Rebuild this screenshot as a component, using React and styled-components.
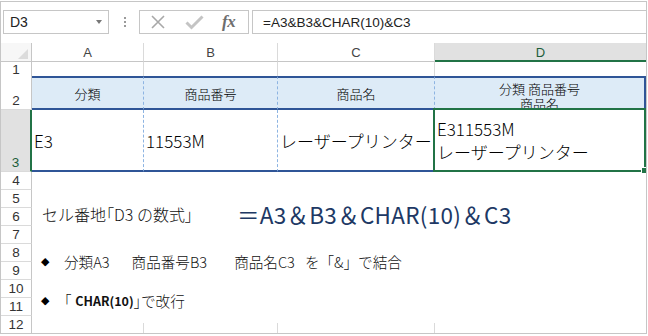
import React from "react";
import styled, { createGlobalStyle } from "styled-components";

const GlobalStyle = createGlobalStyle`
  html, body {
    margin: 0;
    padding: 0;
    background: #ffffff;
  }
  body {
    font-family: "Noto Sans CJK JP", "Noto Sans", sans-serif;
    font-weight: 300;
    color: #000;
  }
`;

const COLS = "31px 112px 134px 157px 1fr";
const BLUE = "#2f5597";
const GREEN = "#217346";
const GRID = "#dadada";

const Frame = styled.div`
  box-sizing: border-box;
  width: 647px;
  height: 333px;
  margin-top: 1px;
  border: 1px solid #c6c6c6;
  display: flex;
  flex-direction: column;
  overflow: hidden;
`;

/* formula bar */
const FormulaBar = styled.div`
  height: 41px;
  flex-shrink: 0;
  display: flex;
  align-items: flex-start;
  padding: 8px 0 0 2px;
  box-sizing: border-box;
`;

const NameBox = styled.div`
  box-sizing: border-box;
  width: 106px;
  height: 24px;
  border: 1px solid #c6c6c6;
  display: flex;
  align-items: center;
  justify-content: space-between;
  padding: 0 6px 0 6px;
  font-family: "Liberation Sans", Arial, sans-serif;
  font-weight: 400;
  font-size: 14px;
  color: #222;
`;

const Caret = styled.span`
  width: 0;
  height: 0;
  border-left: 3.5px solid transparent;
  border-right: 3.5px solid transparent;
  border-top: 4px solid #777;
`;

const Dots = styled.div`
  width: 2px;
  margin: 7px 13px 0 15px;
  display: flex;
  flex-direction: column;
  gap: 2px;
  span {
    width: 2px;
    height: 2px;
    background: #9a9a9a;
  }
`;

const FxBox = styled.div`
  box-sizing: border-box;
  width: 110px;
  height: 24px;
  border: 1px solid #c6c6c6;
  display: flex;
  align-items: center;
  padding-left: 10px;
`;

const FxLabel = styled.span`
  margin-left: 18px;
  font-family: "Liberation Serif", "DejaVu Serif", serif;
  font-style: italic;
  font-weight: bold;
  font-size: 17px;
  color: #6e6e6e;
  letter-spacing: -0.5px;
`;

const FormulaInput = styled.div`
  box-sizing: border-box;
  flex: 1;
  margin-left: 3px;
  height: 24px;
  border: 1px solid #c6c6c6;
  border-right: none;
  display: flex;
  align-items: center;
  padding-left: 10px;
  font-family: "Liberation Sans", Arial, sans-serif;
  font-weight: 400;
  font-size: 13.5px;
  color: #222;
`;

/* sheet */
const Row = styled.div`
  display: grid;
  grid-template-columns: ${COLS};
  height: ${(p) => p.$h}px;
  flex-shrink: 0;
`;

const Corner = styled.div`
  box-sizing: border-box;
  border-right: 1px solid #c6c6c6;
  border-bottom: 1px solid #c6c6c6;
  background: #f7f7f7;
  display: flex;
  align-items: flex-end;
  justify-content: flex-end;
  padding: 0 3px 2px 0;
  span {
    width: 0;
    height: 0;
    border-left: 10px solid transparent;
    border-bottom: 10px solid #dcdcdc;
  }
`;

const ColHead = styled.div`
  box-sizing: border-box;
  border-right: ${(p) => (p.$last ? "none" : `1px solid ${GRID}`)};
  border-bottom: ${(p) => (p.$active ? `2px solid ${GREEN}` : "1px solid #c6c6c6")};
  background: ${(p) => (p.$active ? "#e1e1e1" : "#ffffff")};
  color: ${(p) => (p.$active ? "#1e5e3b" : "#444")};
  font-family: "Liberation Sans", Arial, sans-serif;
  font-weight: 400;
  font-size: 13px;
  display: flex;
  align-items: center;
  justify-content: center;
  padding-top: 1px;
`;

const RowHead = styled.div`
  box-sizing: border-box;
  border-right: ${(p) => (p.$active ? `2px solid ${GREEN}` : "1px solid #c6c6c6")};
  border-bottom: ${(p) => (p.$end ? "none" : `1px solid ${GRID}`)};
  background: ${(p) => (p.$active ? "#e1e1e1" : "#ffffff")};
  color: ${(p) => (p.$active ? "#1e5e3b" : "#333")};
  font-family: "Liberation Sans", Arial, sans-serif;
  font-weight: 400;
  font-size: 13.5px;
  display: flex;
  align-items: flex-end;
  justify-content: center;
  line-height: 16px;
  flex: ${(p) => (p.$flex ? 1 : "none")};
`;

const GridCell = styled.div`
  box-sizing: border-box;
  border-right: ${(p) => (p.$last ? "none" : `1px solid ${GRID}`)};
`;

const TableCell = styled.div`
  box-sizing: border-box;
  position: relative;
  background: ${(p) => (p.$head ? "#ddebf7" : "#ffffff")};
  border-top: ${(p) => (p.$top ? `2px solid ${BLUE}` : "none")};
  border-bottom: 2px solid ${BLUE};
  border-right: ${(p) => (p.$last ? `2px solid ${BLUE}` : "1px dashed #8db4e2")};
  display: flex;
  flex-direction: column;
  align-items: ${(p) => (p.$head ? "center" : "flex-start")};
  justify-content: ${(p) => (p.$head ? "flex-end" : "center")};
  padding: ${(p) => (p.$head ? "0 0 7px 0" : "0 0 0 2px")};
  font-size: ${(p) => (p.$head ? 13 : 17)}px;
  line-height: ${(p) => (p.$head ? 15 : 23)}px;
  white-space: nowrap;
  overflow: hidden;
`;

const WrapHead = styled(TableCell)`
  justify-content: flex-start;
  padding: 3px 0 0 0;
  text-align: center;
`;

const Selection = styled.div`
  position: absolute;
  left: -2px;
  top: -2px;
  right: -2px;
  bottom: -2px;
  border: 2px solid ${GREEN};
  pointer-events: none;
`;

const Handle = styled.div`
  position: absolute;
  right: -4px;
  bottom: -4px;
  width: 5px;
  height: 5px;
  background: ${GREEN};
  border: 1px solid #fff;
`;

const Body = styled.div`
  flex: 1;
  display: grid;
  grid-template-columns: 31px 1fr;
  min-height: 0;
`;

const HeadColumn = styled.div`
  display: flex;
  flex-direction: column;
`;

const Content = styled.div`
  display: flex;
  flex-direction: column;
`;

const TextPanel = styled.div`
  flex: 1;
  display: flex;
  flex-direction: column;
  padding-left: 9px;
`;

const Strip = styled.div`
  height: 10px;
  display: grid;
  grid-template-columns: 112px 134px 157px 1fr;
`;

const TitleLine = styled.div`
  margin-top: 29px;
  padding-left: 1px;
  height: 26px;
  display: flex;
  align-items: center;
  white-space: nowrap;
`;

const Label = styled.span`
  font-size: 16px;
  color: #111;
`;

const Narrow = styled.span`
  font-feature-settings: "palt";
`;

const Formula = styled.span`
  margin-left: 44px;
  font-size: 22.5px;
  font-weight: 400;
  color: #203864;
  letter-spacing: 0.3px;
`;

const Bullet = styled.div`
  margin-top: ${(p) => p.$mt}px;
  height: 20px;
  display: flex;
  align-items: center;
  white-space: nowrap;
  font-size: 14.6px;
  color: #111;
`;

const Diamond = styled.span`
  font-family: "DejaVu Sans", sans-serif;
  font-weight: 400;
  font-size: 11px;
  width: 23px;
  color: #000;
`;

const Item = styled.span`
  margin-left: ${(p) => p.$ml || 0}px;
`;

const Bold = styled.span`
  font-weight: bold;
  font-size: 12.5px;
  margin-left: 4px;
`;

function CrossIcon() {
  return (
    <svg width="16" height="16" viewBox="0 0 16 16">
      <path d="M2 2 L14 14 M14 2 L2 14" stroke="#a8a8a8" strokeWidth="1.6" fill="none" />
    </svg>
  );
}

function CheckIcon() {
  return (
    <svg width="19" height="16" viewBox="0 0 19 16" style={{ marginLeft: 19 }}>
      <path d="M1.5 8.5 L6.5 13.5 L17.5 2.5" stroke="#c4c4c4" strokeWidth="3" fill="none" />
    </svg>
  );
}

export default function App() {
  const bodyRows = [4, 5, 6, 7, 8, 9, 10, 11, 12];
  return (
    <>
      <GlobalStyle />
      <Frame>
        <FormulaBar>
          <NameBox>
            <span>D3</span>
            <Caret />
          </NameBox>
          <Dots>
            <span />
            <span />
            <span />
          </Dots>
          <FxBox>
            <CrossIcon />
            <CheckIcon />
            <FxLabel>fx</FxLabel>
          </FxBox>
          <FormulaInput>=A3&amp;B3&amp;CHAR(10)&amp;C3</FormulaInput>
        </FormulaBar>

        <Row $h={19}>
          <Corner>
            <span />
          </Corner>
          <ColHead>A</ColHead>
          <ColHead>B</ColHead>
          <ColHead>C</ColHead>
          <ColHead $last $active>D</ColHead>
        </Row>

        <Row $h={14}>
          <RowHead>1</RowHead>
          <GridCell />
          <GridCell />
          <GridCell />
          <GridCell $last />
        </Row>

        <Row $h={34}>
          <RowHead>2</RowHead>
          <TableCell $head $top>分類</TableCell>
          <TableCell $head $top>商品番号</TableCell>
          <TableCell $head $top>商品名</TableCell>
          <WrapHead $head $top $last>
            <span>分類 商品番号</span>
            <span>商品名</span>
          </WrapHead>
        </Row>

        <Row $h={62}>
          <RowHead $active>3</RowHead>
          <TableCell>E3</TableCell>
          <TableCell>11553M</TableCell>
          <TableCell>レーザープリンター</TableCell>
          <TableCell $last style={{ overflow: "visible" }}>
            <span>E311553M</span>
            <span>レーザープリンター</span>
            <Selection />
            <Handle />
          </TableCell>
        </Row>

        <Body>
          <HeadColumn>
            {bodyRows.map((n) => (
              <RowHead key={n} $flex $end={n === 12}>
                {n}
              </RowHead>
            ))}
          </HeadColumn>
          <Content>
            <TextPanel>
              <TitleLine>
                <Label>
                  セル番地<Narrow>「</Narrow>D3 の数式<Narrow>」</Narrow>
                </Label>
                <Formula>＝A3＆B3＆CHAR(10)＆C3</Formula>
              </TitleLine>
              <Bullet $mt={24}>
                <Diamond>◆</Diamond>
                <Item>分類A3</Item>
                <Item $ml={22}>商品番号B3</Item>
                <Item $ml={27}>商品名C3</Item>
                <Item $ml={10}>を「&amp;」で結合</Item>
              </Bullet>
              <Bullet $mt={19}>
                <Diamond>◆</Diamond>
                <Narrow>「</Narrow>
                <Bold>CHAR(10)</Bold>
                <Narrow>」</Narrow>
                <Item>で改行</Item>
              </Bullet>
            </TextPanel>
            <Strip>
              <GridCell />
              <GridCell />
              <GridCell />
              <GridCell $last />
            </Strip>
          </Content>
        </Body>
      </Frame>
    </>
  );
}
